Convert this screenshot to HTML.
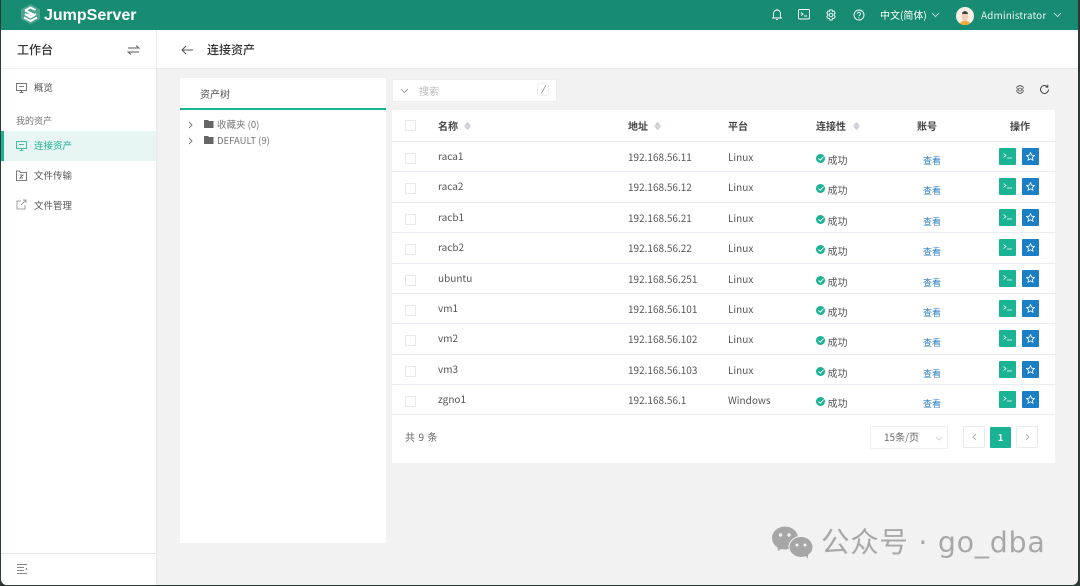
<!DOCTYPE html>
<html lang="zh"><head><meta charset="utf-8"><title>JumpServer</title>
<style>
*{box-sizing:border-box}
html,body{margin:0;padding:0;width:1080px;height:586px;overflow:hidden;background:#2b3a35}
body{font-family:"Noto Sans CJK SC","Liberation Sans",sans-serif;color:#555}
#app{position:absolute;left:1px;top:0;width:1077px;height:585px;background:#f2f2f2;border-radius:0 0 6px 6px;overflow:hidden;filter:blur(.35px)}
.a{position:absolute;white-space:nowrap}
svg{position:absolute;display:block;overflow:visible}
.hd{font-size:10px;font-weight:bold;color:#444;line-height:14px;top:118.500px}
.row{position:absolute;left:391px;width:663px;height:30px;border-top:1px solid #ebebf3;font-size:10px;line-height:14px;color:#555}
.row span,.row i,.row svg{position:absolute;white-space:nowrap;font-style:normal}
.cb{left:13px;top:11px;width:11px;height:11px;border:1px solid #e7e7ec;background:#fff;border-radius:1px}
.n{left:46px;top:7px}
.ip{left:236px;top:8px}
.pf{left:336px;top:8px}
.ok{left:424px;top:12px;width:9px;height:9px;border-radius:50%;background:#1ab394}
.ck{left:425.500px;top:14px}
.st{left:435.500px;top:10.500px}
.lk{left:531px;top:12px;font-size:9px;color:#2d80c4}
.g,.b{top:5.500px;width:17px;height:17px;border-radius:1px}
.g{left:607px;background:#1ab394}
.b{left:630px;background:#1c7fc6}
.ti{left:610.500px;top:11px}
.si{left:634px;top:9.500px}
.side{left:33px;font-size:9.500px;color:#555;line-height:14px}
</style></head><body>
<svg width="0" height="0" style="position:absolute"><defs>
<symbol id="ck" viewBox="0 0 6 5"><path d="M.5 2.500l1.800 1.700L5.500.7" fill="none" stroke="#fff"/></symbol>
<symbol id="tm" viewBox="0 0 10 6"><path d="M.5.500L3 2.500.5 4.500M4 5h5" fill="none" stroke="#fff" stroke-width=".8"/></symbol>
<symbol id="st" viewBox="0 0 9 9"><path d="M4.500.6l1.200 2.600 2.800.3-2.100 1.900.6 2.800-2.500-1.400L2 8.200l.6-2.800L.5 3.500l2.800-.3z" fill="none" stroke="#fff" stroke-width=".8"/></symbol>
</defs></svg>
<div id="app">
<!-- top bar -->
<div class="a" style="left:0;top:0;width:1077px;height:30px;background:#178c72"></div>
<svg style="left:19px;top:3px" width="21" height="22" viewBox="0 0 21 22" fill="none"><path d="M10.500 1L20 6.500V16L10.500 21.500L1 16V6.500Z" fill="#fff" opacity=".22"/><path d="M5 7.500L10.500 4.500L15.500 7M5 7.500L15 12L5 11.500M4 14.500L10.500 18L17 14.500M5 11L10.500 14.500L16 11" stroke="#fff" stroke-width="2"/></svg>
<div class="a" style="left:43px;top:6px;font-family:'Liberation Sans',sans-serif;font-size:16px;font-weight:bold;color:#fff;line-height:20px">JumpServer</div>
<svg style="left:770px;top:8px" width="12" height="13" viewBox="0 0 12 13" fill="none" stroke="#fff" stroke-width=".9"><path d="M1 10h10M2.500 10V5.500a3.500 3.500 0 0 1 7 0V10M5 11.500h2M6 1v1"/></svg>
<svg style="left:797px;top:9px" width="13" height="11" viewBox="0 0 13 11" fill="none" stroke="#fff" stroke-width=".9"><rect x=".5" y=".5" width="11" height="9.500" rx="1"/><path d="M3 3.500L5 5L3 6.500M6 7h3"/></svg>
<svg style="left:824px;top:9px" width="12" height="12" viewBox="0 0 12 12" fill="none" stroke="#fff" stroke-width=".9"><path d="M4.800 1h2.400l.4 1.400 1.400-.4 1.200 2-1 1 .0 1.600 1 1-1.200 2-1.400-.4L7.200 11H4.800l-.4-1.800-1.400.4-1.200-2 1-1V5l-1-1 1.200-2 1.400.4z"/><circle cx="6" cy="6" r="1.800"/></svg>
<svg style="left:852px;top:9px" width="12" height="12" viewBox="0 0 12 12" fill="none" stroke="#fff" stroke-width=".9"><circle cx="6" cy="6" r="5"/><path d="M4.500 4.700a1.500 1.500 0 1 1 2.300 1.300C6.200 6.400 6 6.700 6 7.300M6 8.300v1"/></svg>
<div class="a" style="left:879px;top:8px;font-size:10px;color:#fff;line-height:14px">中文(简体)</div>
<svg style="left:930px;top:12px" width="9" height="6" viewBox="0 0 9 6" fill="none" stroke="#d7eee8" stroke-width=".8"><path d="M1 1l3.500 3.500L8 1"/></svg>
<div class="a" style="left:955px;top:7px;width:18px;height:18px;border-radius:50%;background:#f6efe8;overflow:hidden"><div class="a" style="left:3px;top:14px;width:12px;height:5px;background:#f1a93a;border-radius:5px 5px 0 0"></div><div class="a" style="left:6px;top:5px;width:6px;height:9px;background:#f4cdb4;border-radius:3px"></div><div class="a" style="left:6px;top:4px;width:6px;height:2.500px;background:#444;border-radius:3px 3px 0 0"></div></div>
<div class="a" style="left:980px;top:8px;font-size:10px;color:#e6f4f0;line-height:14px;letter-spacing:.1px">Administrator</div>
<svg style="left:1052px;top:12px" width="9" height="6" viewBox="0 0 9 6" fill="none" stroke="#d7eee8" stroke-width=".8"><path d="M1 1l3.500 3.500L8 1"/></svg>

<!-- sidebar -->
<div class="a" style="left:0;top:30px;width:155px;height:555px;background:#fff;box-shadow:1px 0 2px rgba(0,0,0,.05)"></div>
<div class="a" style="left:16px;top:41px;font-size:12px;color:#333;line-height:17px;font-weight:500">工作台</div>
<svg style="left:126px;top:44px" width="13" height="12" viewBox="0 0 13 12" fill="none" stroke="#555" stroke-width=".9"><path d="M1 4h11L9 1.500M12 8H1l3 2.500"/></svg>
<div class="a" style="left:0;top:68px;width:155px;height:1px;background:#eee"></div>
<svg style="left:15px;top:83px" width="12" height="10" viewBox="0 0 12 10" fill="none" stroke="#555" stroke-width=".8"><rect x=".5" y=".5" width="10" height="7"/><path d="M3 3.500h5M5.500 7.500v2M3.500 9.500h4"/></svg>
<div class="a side" style="top:80px">概览</div>
<div class="a" style="left:15px;top:114px;font-size:9px;color:#777;line-height:13px">我的资产</div>
<div class="a" style="left:0;top:131px;width:155px;height:30px;background:#e7f6f2"></div>
<div class="a" style="left:0;top:131px;width:3px;height:30px;background:#1ab394"></div>
<svg style="left:15px;top:141px" width="12" height="10" viewBox="0 0 12 10" fill="none" stroke="#1ab394" stroke-width=".8"><rect x=".5" y=".5" width="10" height="7"/><path d="M3 3.500h5M5.500 7.500v2M3.500 9.500h4"/></svg>
<div class="a side" style="top:138px;color:#1ab394">连接资产</div>
<svg style="left:15px;top:170px" width="11" height="11" viewBox="0 0 11 11" fill="none" stroke="#555" stroke-width=".8"><path d="M.5 1h3l1 1.500h6v8h-10zM4 5h3L4 8h3"/></svg>
<div class="a side" style="top:167.500px">文件传输</div>
<svg style="left:15px;top:199px" width="11" height="11" viewBox="0 0 11 11" fill="none" stroke="#888" stroke-width=".8"><path d="M9 6v4H1V2h4M5 6l5-5M7 1h3v3"/></svg>
<div class="a side" style="top:198px">文件管理</div>
<div class="a" style="left:0;top:553px;width:155px;height:1px;background:#e8e8e8"></div>
<svg style="left:16px;top:564px" width="11" height="10" viewBox="0 0 11 10" fill="none" stroke="#888" stroke-width="1"><path d="M0 .5h10M0 3.500h7M0 6.500h7M0 9.500h10"/><path d="M10 3.500L8.200 5 10 6.500z" fill="#888" stroke="none"/></svg>

<!-- page heading -->
<div class="a" style="left:156px;top:30px;width:921px;height:39px;background:#fff;border-bottom:1px solid #e8e8e8"></div>
<svg style="left:180px;top:45px" width="12" height="10" viewBox="0 0 12 10" fill="none" stroke="#555" stroke-width="1"><path d="M12 5H1M5 1L1 5l4 4"/></svg>
<div class="a" style="left:206px;top:41px;font-size:12px;color:#333;line-height:17px;font-weight:500">连接资产</div>

<!-- tree -->
<div class="a" style="left:179px;top:78px;width:206px;height:465px;background:#fff"></div>
<div class="a" style="left:179px;top:108px;width:206px;height:2px;background:#1ab394"></div>
<div class="a" style="left:199px;top:87px;font-size:10px;color:#555;line-height:14px">资产树</div>
<svg style="left:187px;top:121px" width="5" height="8" viewBox="0 0 5 8" fill="none" stroke="#777" stroke-width=".9"><path d="M1 1l3 3-3 3"/></svg>
<svg style="left:187px;top:137px" width="5" height="8" viewBox="0 0 5 8" fill="none" stroke="#777" stroke-width=".9"><path d="M1 1l3 3-3 3"/></svg>
<svg style="left:203px;top:120px" width="10" height="8" viewBox="0 0 10 8"><path d="M0 0h4l1 1h4.500v7H0z" fill="#666"/></svg>
<svg style="left:203px;top:136px" width="10" height="8" viewBox="0 0 10 8"><path d="M0 0h4l1 1h4.500v7H0z" fill="#666"/></svg>
<div class="a" style="left:216px;top:117px;font-size:9.500px;color:#777;line-height:14px">收藏夹 (0)</div>
<div class="a" style="left:216px;top:133px;font-size:9.500px;color:#777;line-height:14px">DEFAULT (9)</div>

<!-- search -->
<div class="a" style="left:391px;top:79px;width:165px;height:23px;background:#fff;border:1px solid #eee"></div>
<svg style="left:399px;top:88px" width="9" height="6" viewBox="0 0 9 6" fill="none" stroke="#888" stroke-width=".8"><path d="M1 1l3.500 3.500L8 1"/></svg>
<div class="a" style="left:418px;top:84px;font-size:10px;color:#bbb;line-height:14px">搜索</div>
<div class="a" style="left:536px;top:83px;width:12px;height:13px;border:1px solid #eee;border-radius:3px;font-size:8px;line-height:11px;text-align:center;color:#555;font-style:italic">/</div>
<svg style="left:1014px;top:84px" width="10" height="11" viewBox="0 0 12 12" fill="none" stroke="#555" stroke-width=".9"><path d="M4.800 1h2.400l.4 1.400 1.400-.4 1.200 2-1 1 .0 1.600 1 1-1.200 2-1.400-.4L7.200 11H4.800l-.4-1.800-1.400.4-1.200-2 1-1V5l-1-1 1.200-2 1.400.4z"/><circle cx="6" cy="6" r="1.800"/></svg>
<svg style="left:1038px;top:84px" width="11" height="11" viewBox="0 0 11 11" fill="none" stroke="#444" stroke-width="1"><path d="M9.500 5.500a4 4 0 1 1-1.200-2.900M8.800 .8v2.300H6.500"/></svg>

<!-- table -->
<div class="a" style="left:391px;top:110px;width:663px;height:353px;background:#fff;border-radius:2px"></div>
<div class="a" style="left:404px;top:120px;width:11px;height:11px;border:1px solid #e7e7ec;background:#fff"></div>
<div class="a hd" style="left:437px">名称</div>
<svg style="left:463px;top:122px" width="7" height="8" viewBox="0 0 7 8" fill="#c8ccd4"><path d="M3.500 0L7 3.700H0zM0 4.300h7L3.500 8z"/></svg>
<div class="a hd" style="left:627px">地址</div>
<svg style="left:653px;top:122px" width="7" height="8" viewBox="0 0 7 8" fill="#c8ccd4"><path d="M3.500 0L7 3.700H0zM0 4.300h7L3.500 8z"/></svg>
<div class="a hd" style="left:727px">平台</div>
<div class="a hd" style="left:815px">连接性</div>
<svg style="left:852px;top:122px" width="7" height="8" viewBox="0 0 7 8" fill="#c8ccd4"><path d="M3.500 0L7 3.700H0zM0 4.300h7L3.500 8z"/></svg>
<div class="a hd" style="left:916px">账号</div>
<div class="a hd" style="left:1009px">操作</div>

<div class="row" style="top:141px"><i class="cb"></i><span class="n">raca1</span><span class="ip">192.168.56.11</span><span class="pf">Linux</span><i class="ok"></i><svg class="ck" width="6" height="5"><use href="#ck"/></svg><span class="st">成功</span><span class="lk">查看</span><i class="g"></i><svg class="ti" width="10" height="6"><use href="#tm"/></svg><i class="b"></i><svg class="si" width="9" height="9"><use href="#st"/></svg></div>
<div class="row" style="top:171px"><i class="cb"></i><span class="n">raca2</span><span class="ip">192.168.56.12</span><span class="pf">Linux</span><i class="ok"></i><svg class="ck" width="6" height="5"><use href="#ck"/></svg><span class="st">成功</span><span class="lk">查看</span><i class="g"></i><svg class="ti" width="10" height="6"><use href="#tm"/></svg><i class="b"></i><svg class="si" width="9" height="9"><use href="#st"/></svg></div>
<div class="row" style="top:202px"><i class="cb"></i><span class="n">racb1</span><span class="ip">192.168.56.21</span><span class="pf">Linux</span><i class="ok"></i><svg class="ck" width="6" height="5"><use href="#ck"/></svg><span class="st">成功</span><span class="lk">查看</span><i class="g"></i><svg class="ti" width="10" height="6"><use href="#tm"/></svg><i class="b"></i><svg class="si" width="9" height="9"><use href="#st"/></svg></div>
<div class="row" style="top:232px"><i class="cb"></i><span class="n">racb2</span><span class="ip">192.168.56.22</span><span class="pf">Linux</span><i class="ok"></i><svg class="ck" width="6" height="5"><use href="#ck"/></svg><span class="st">成功</span><span class="lk">查看</span><i class="g"></i><svg class="ti" width="10" height="6"><use href="#tm"/></svg><i class="b"></i><svg class="si" width="9" height="9"><use href="#st"/></svg></div>
<div class="row" style="top:263px"><i class="cb"></i><span class="n">ubuntu</span><span class="ip">192.168.56.251</span><span class="pf">Linux</span><i class="ok"></i><svg class="ck" width="6" height="5"><use href="#ck"/></svg><span class="st">成功</span><span class="lk">查看</span><i class="g"></i><svg class="ti" width="10" height="6"><use href="#tm"/></svg><i class="b"></i><svg class="si" width="9" height="9"><use href="#st"/></svg></div>
<div class="row" style="top:293px"><i class="cb"></i><span class="n">vm1</span><span class="ip">192.168.56.101</span><span class="pf">Linux</span><i class="ok"></i><svg class="ck" width="6" height="5"><use href="#ck"/></svg><span class="st">成功</span><span class="lk">查看</span><i class="g"></i><svg class="ti" width="10" height="6"><use href="#tm"/></svg><i class="b"></i><svg class="si" width="9" height="9"><use href="#st"/></svg></div>
<div class="row" style="top:323px"><i class="cb"></i><span class="n">vm2</span><span class="ip">192.168.56.102</span><span class="pf">Linux</span><i class="ok"></i><svg class="ck" width="6" height="5"><use href="#ck"/></svg><span class="st">成功</span><span class="lk">查看</span><i class="g"></i><svg class="ti" width="10" height="6"><use href="#tm"/></svg><i class="b"></i><svg class="si" width="9" height="9"><use href="#st"/></svg></div>
<div class="row" style="top:354px"><i class="cb"></i><span class="n">vm3</span><span class="ip">192.168.56.103</span><span class="pf">Linux</span><i class="ok"></i><svg class="ck" width="6" height="5"><use href="#ck"/></svg><span class="st">成功</span><span class="lk">查看</span><i class="g"></i><svg class="ti" width="10" height="6"><use href="#tm"/></svg><i class="b"></i><svg class="si" width="9" height="9"><use href="#st"/></svg></div>
<div class="row" style="top:384px;border-bottom:1px solid #ebebf3;height:31px"><i class="cb"></i><span class="n">zgno1</span><span class="ip">192.168.56.1</span><span class="pf">Windows</span><i class="ok"></i><svg class="ck" width="6" height="5"><use href="#ck"/></svg><span class="st">成功</span><span class="lk">查看</span><i class="g"></i><svg class="ti" width="10" height="6"><use href="#tm"/></svg><i class="b"></i><svg class="si" width="9" height="9"><use href="#st"/></svg></div>

<!-- pagination -->
<div class="a" style="left:404px;top:430px;font-size:10px;color:#666;line-height:14px;letter-spacing:.6px">共 9 条</div>
<div class="a" style="left:869px;top:426px;width:78px;height:23px;border:1px solid #eeeef2;border-radius:2px;background:#fff"></div>
<div class="a" style="left:883px;top:430px;font-size:10px;color:#666;line-height:14px">15条/页</div>
<svg style="left:934px;top:436px" width="8" height="5" viewBox="0 0 8 5" fill="none" stroke="#ccc" stroke-width=".8"><path d="M1 1l3 3 3-3"/></svg>
<div class="a" style="left:962px;top:426px;width:22px;height:22px;border:1px solid #e9e9ee;border-radius:2px;background:#fff"></div>
<svg style="left:971px;top:433px" width="5" height="8" viewBox="0 0 5 8" fill="none" stroke="#aaa" stroke-width=".9"><path d="M4 1L1 4l3 3"/></svg>
<div class="a" style="left:989px;top:427px;width:21px;height:21px;background:#1ab394;border-radius:1px;color:#fff;font-size:9.500px;font-weight:bold;text-align:center;line-height:21px">1</div>
<div class="a" style="left:1015px;top:426px;width:22px;height:22px;border:1px solid #e9e9ee;border-radius:2px;background:#fff"></div>
<svg style="left:1024px;top:433px" width="5" height="8" viewBox="0 0 5 8" fill="none" stroke="#aaa" stroke-width=".9"><path d="M1 1l3 3-3 3"/></svg>

<!-- watermark -->
<svg style="left:771px;top:526px" width="42" height="33" viewBox="0 0 42 33"><ellipse cx="13" cy="12" rx="13" ry="11.500" fill="#a6a6a6"/><path d="M5 19l1 6 6-4z" fill="#a6a6a6"/><ellipse cx="29" cy="21" rx="12" ry="10.500" fill="#a6a6a6" stroke="#f2f2f2" stroke-width="1"/><path d="M33 29l3 4v-6z" fill="#a6a6a6"/><circle cx="8.500" cy="9" r="1.700" fill="#f2f2f2"/><circle cx="17" cy="9" r="1.700" fill="#f2f2f2"/><circle cx="25" cy="19" r="1.500" fill="#f2f2f2"/><circle cx="33" cy="19" r="1.500" fill="#f2f2f2"/></svg>
<div class="a" style="left:820px;top:524px;font-size:28.500px;color:#a8a8a8;line-height:38px;font-family:'DejaVu Sans','Noto Sans CJK SC',sans-serif;letter-spacing:.7px">公众号 · go_dba</div>
</div>
</body></html>
